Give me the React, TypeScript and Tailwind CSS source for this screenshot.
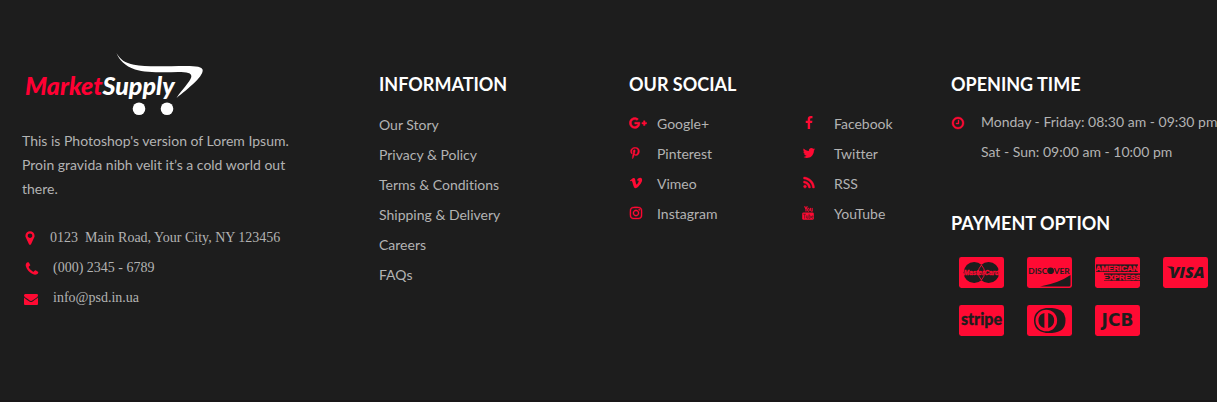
import React from "react";
import { FaGooglePlusG, FaInstagram, FaPinterestP, FaVimeoV } from "react-icons/fa";

const glyphs = {
  marker:
    "M1152 640q0-106-75-181t-181-75-181 75-75 181 75 181 181 75 181-75 75-181zm256 0q0 109-33 179l-364 774q-16 33-47.5 52t-67.5 19-67.5-19-46.5-52l-365-774q-33-70-33-179 0-212 150-362t362-150 362 150 150 362z",
  phone:
    "M1600 1240q0 27-10 70.5t-21 68.5q-21 50-122 106-94 51-186 51-27 0-53-3.5t-57.5-12.5-47-14.5-55.5-20.5-49-18q-98-35-175-83-127-79-264-216t-216-264q-48-77-83-175-3-9-18-49t-20.5-55.5-14.5-47-12.5-57.5-3.5-53q0-92 51-186 56-101 106-122 25-11 68.5-21t70.5-10q14 0 21 3 18 6 53 76 11 19 30 54t35 63.5 31 53.5q3 4 17.5 25t21.5 35.5 7 28.5q0 20-28.5 50t-62 55-62 53-28.5 46q0 9 5 22.5t8.5 20.5 14 24 11.5 19q76 137 174 235t235 174q2 1 19 11.5t24 14 20.5 8.5 22.5 5q18 0 46-28.5t53-62 55-62 50-28.5q14 0 28.5 7t35.5 21.5 25 17.5q25 15 53.5 31t63.5 35 54 30q70 35 76 53 3 7 3 21z",
  mail:
    "M1792 710v794q0 66-47 113t-113 47h-1472q-66 0-113-47t-47-113v-794q44 49 101 87 362 246 497 345 57 42 92.5 65.5t94.5 48 110 24.5h2q51 0 110-24.5t94.5-48 92.5-65.5q170-123 498-345 57-39 100-87zm0-294q0 79-49 151t-122 123q-376 261-468 325-10 7-42.5 31t-54 38.5-52 32.5-57.5 27-50 9h-2q-23 0-50-9t-57.5-27-52-32.5-54-38.5-42.5-31q-91-64-262-182.5t-205-142.5q-62-42-117-115.5t-55-136.5q0-78 41.5-130t118.5-52h1472q65 0 112.5 47t47.5 113z",
  clock:
    "M1024 544v448q0 14-9 23t-23 9h-320q-14 0-23-9t-9-23v-64q0-14 9-23t23-9h224v-352q0-14 9-23t23-9h64q14 0 23 9t9 23zm416 352q0-148-73-273t-198-198-273-73-273 73-198 198-73 273 73 273 198 198 273 73 273-73 198-198 73-273zm224 0q0 209-103 385.5t-279.5 279.5-385.5 103-385.5-103-279.5-279.5-103-385.5 103-385.5 279.5-279.5 385.5-103 385.5 103 279.5 279.5 103 385.5z",
  facebook:
    "M1343 12v264h-157q-86 0-116 36t-30 108v189h293l-39 296h-254v759h-306v-759h-255v-296h255v-218q0-186 104-288.5t277-102.5q147 0 228 12z",
  twitter:
    "M1684 408q-67 98-162 167 1 14 1 42 0 130-38 259.5t-115.5 248.5-184.5 210.5-258 146-323 54.5q-271 0-496-145 35 4 78 4 225 0 401-138-105-2-188-64.5t-114-159.5q33 5 61 5 43 0 85-11-112-23-185.5-111.5t-73.5-205.5v-4q68 38 146 41-66-44-105-115t-39-154q0-88 44-163 121 149 294.5 238.5t371.5 99.5q-8-38-8-74 0-134 94.5-228.5t228.5-94.5q140 0 236 102 109-21 205-78-37 115-142 178 93-10 186-50z",
  rss:
    "M576 1344q0 80-56 136t-136 56-136-56-56-136 56-136 136-56 136 56 56 136zm512 123q2 28-17 48-18 21-47 21h-135q-25 0-43-16.5t-20-41.5q-22-229-184.5-391.5t-391.5-184.5q-25-2-41.5-20t-16.5-43v-135q0-29 21-47 17-17 43-17h5q160 13 306 80.5t259 181.5q114 113 181.5 259t80.5 306zm512 2q2 27-18 47-18 20-46 20h-143q-26 0-44.5-17.5t-19.5-42.5q-12-215-101-408.5t-231.5-336-336-231.5-408.5-102q-25-1-42.5-19.5t-17.5-43.5v-143q0-28 20-46 18-18 44-18h3q262 13 501.5 120t425.5 294q187 186 294 425.5t120 501.5z",
};

function Glyph({ name, className = "size-4" }: { name: keyof typeof glyphs; className?: string }) {
  return (
    <svg
      viewBox="0 0 1792 1792"
      className={className}
      fill="currentColor"
      stroke="currentColor"
      strokeWidth={name === "clock" || name === "rss" ? 50 : 0}
      aria-hidden="true"
    >
      <path d={glyphs[name]} />
    </svg>
  );
}

function YouTubeIcon() {
  return (
    <svg viewBox="0 0 12 14" className="h-3.5 w-3" aria-hidden="true">
      <path d="M2.6 0.3 L4 3.2 L5.3 0.3 M4 3.2 V5.6" fill="none" stroke="currentColor" strokeWidth="1.1" />
      <rect x="5.6" y="2.3" width="1.6" height="3" rx="0.8" fill="none" stroke="currentColor" strokeWidth="1" />
      <path d="M8.6 1.9 V4.8 Q9.2 5.7 10.2 4.6 M10.2 1.9 V5.6" fill="none" stroke="currentColor" strokeWidth="1" />
      <rect x="0.2" y="6.4" width="11.6" height="7.4" rx="1.4" fill="currentColor" />
      <path
        d="M1.2 8.2 H4 M2.6 8.2 V12.6 M4.4 9.4 V12 Q5 12.8 5.9 11.9 M5.9 9.4 V12.6 M7.1 7.8 V12.6 M7.1 10 Q8.5 9.2 8.5 10.6 V11.6 Q8.5 12.8 7.1 12.2 M9.6 11 H11 V10.4 Q10.3 9.2 9.6 10.4 V11.8 Q10.3 13 11 11.8"
        fill="none"
        stroke="#1d1d1d"
        strokeWidth="0.5"
      />
    </svg>
  );
}

function Logo() {
  return (
    <svg viewBox="0 0 184 66" className="h-[66px] w-[184px]" role="img" aria-label="MarketSupply">
      <text x="3" y="43" fontFamily="Lato" fontWeight="900" fontStyle="italic" fontSize="25">
        <tspan fill="#ff0033">Market</tspan>
        <tspan fill="#ffffff">Supply</tspan>
      </text>
      <path
        d="M94.5 1 C98 7.5 103 11 112 12.8 C124 15.2 145 14 164 14 C174 14 181 14.8 180.7 18.5 C180.5 25 167 36 154.5 46 C160 37.5 168 30 169.3 25 C170 20.8 165 20 156 20 C140 20.4 124 20.6 113 17.4 C103 14 97 8 94.5 1 Z"
        fill="#ffffff"
      />
      <circle cx="117" cy="56.7" r="6.3" fill="#ffffff" />
      <circle cx="145" cy="56.7" r="6.3" fill="#ffffff" />
    </svg>
  );
}

const ink = "#1d1d1d";
const red = "#ff0a33";

function Card({ label, children }: { label: string; children: React.ReactNode }) {
  return (
    <li>
      <svg viewBox="0 0 45 31" className="h-[31px] w-[45px]" role="img" aria-label={label}>
        <rect width="45" height="31" rx="2.4" fill={red} />
        {children}
      </svg>
    </li>
  );
}

function PaymentCards() {
  return (
    <ul className="ml-2 grid w-max grid-cols-4 gap-x-[23px] gap-y-[17px]">
      <Card label="MasterCard">
        <circle cx="15.2" cy="15.5" r="10.5" fill={ink} />
        <circle cx="29.6" cy="15.5" r="10.5" fill={ink} />
        <path d="M22.4 8 Q29 15.5 22.4 23 Q16 15.5 22.4 8 Z" fill="none" stroke={red} strokeWidth="0.9" />
        <text x="22.4" y="17.8" textAnchor="middle" fontFamily="Liberation Sans" fontWeight="700" fontStyle="italic" fontSize="6.4" fill={red} stroke={red} strokeWidth="0.3">
          MasterCard
        </text>
      </Card>
      <Card label="Discover">
        <text x="22" y="16.6" textAnchor="middle" fontFamily="Lato" fontWeight="700" fontSize="8.4" fill={ink}>
          DISCOVER
        </text>
        <circle cx="23.6" cy="13.6" r="3.2" fill={ink} />
        <path d="M13 29.5 Q32 26 43.5 18 V28 Q43.5 29.5 42 29.5 Z" fill={ink} />
      </Card>
      <Card label="American Express">
        <rect x="1" y="7.4" width="42" height="7.6" fill={ink} />
        <rect x="9" y="16.4" width="36" height="7.4" fill={ink} />
        <text x="22" y="14.2" textAnchor="middle" fontFamily="Liberation Sans" fontWeight="700" fontSize="8" fill={red} stroke={red} strokeWidth="0.4">
          AMERICAN
        </text>
        <text x="27" y="23" textAnchor="middle" fontFamily="Liberation Sans" fontWeight="700" fontSize="8" fill={red} stroke={red} strokeWidth="0.4">
          EXPRESS
        </text>
      </Card>
      <Card label="Visa">
        <text x="24" y="21.2" textAnchor="middle" fontFamily="Open Sans" fontWeight="800" fontStyle="italic" fontSize="16" fill={ink}>
          VISA
        </text>
        <path d="M4 9.4 H9.5 L11 15 Q8 11 4 9.4 Z" fill={ink} />
      </Card>
      <Card label="Stripe">
        <text x="22.5" y="20" textAnchor="middle" fontFamily="Lato" fontWeight="900" fontSize="16" fill={ink} stroke={ink} strokeWidth="0.3">
          stripe
        </text>
      </Card>
      <Card label="Diners Club">
        <path d="M19 3 H25 Q38.5 4 38.5 15.5 Q38.5 27 25 28 H19 Q7 26 7 15.5 Q7 5 19 3 Z" fill={ink} />
        <circle cx="19.3" cy="15.5" r="10.8" fill={red} />
        <path d="M17.4 8 A7.7 7.7 0 0 0 17.4 23 Z M21.2 8 A7.7 7.7 0 0 1 21.2 23 Z" fill={ink} />
      </Card>
      <Card label="JCB">
        <text x="22.5" y="21.2" textAnchor="middle" fontFamily="DejaVu Sans" fontWeight="700" fontSize="17" fill={ink}>
          JCB
        </text>
      </Card>
    </ul>
  );
}

function Heading({ children }: { children: React.ReactNode }) {
  return <h2 className="text-lg leading-6 font-bold text-white">{children}</h2>;
}

const links = ["Our Story", "Privacy & Policy", "Terms & Conditions", "Shipping & Delivery", "Careers", "FAQs"];

const social = [
  { name: "Google+", icon: <FaGooglePlusG className="size-[18px]" stroke="currentColor" strokeWidth="16" /> },
  { name: "Facebook", icon: <Glyph name="facebook" className="size-3.5" /> },
  { name: "Pinterest", icon: <FaPinterestP className="size-3" stroke="currentColor" strokeWidth="14" /> },
  { name: "Twitter", icon: <Glyph name="twitter" className="size-3.5" /> },
  { name: "Vimeo", icon: <FaVimeoV className="size-3.5" /> },
  { name: "RSS", icon: <Glyph name="rss" className="size-3.5" /> },
  { name: "Instagram", icon: <FaInstagram className="size-3.5" stroke="currentColor" strokeWidth="12" /> },
  { name: "YouTube", icon: <YouTubeIcon /> },
];

export default function App() {
  return (
    <footer className="min-h-screen border-b-2 border-[#191718] bg-[#1d1d1d] pt-[52px] pb-14 pl-[22px] font-['Lato',sans-serif] text-sm text-[#b3b3b3] [font-variant-ligatures:no-common-ligatures]">
      <div className="grid grid-cols-[minmax(0,357fr)_minmax(0,250fr)_minmax(0,322fr)_minmax(0,266fr)]">
        <section>
          <Logo />
          <p className="mt-[11px] max-w-[280px] leading-6">
            This is Photoshop's version of Lorem Ipsum. Proin gravida nibh velit it’s a cold world out there.
          </p>
          <address className="mt-[22px] font-['Liberation_Serif',serif] leading-[30px] not-italic">
            <div className="flex items-center">
              <span className="flex w-7 text-[#ff0a33]"><Glyph name="marker" /></span>
              <span className="whitespace-pre">0123  Main Road, Your City, NY 123456</span>
            </div>
            <div className="flex items-center">
              <span className="flex w-[31px] pt-0.5 pl-0.5 text-[#ff0a33]"><Glyph name="phone" /></span>
              <a href="tel:0002345-6789">(000) 2345 - 6789</a>
            </div>
            <div className="flex items-center">
              <span className="flex w-[31px] pt-0.5 pl-0.5 text-[#ff0a33]"><Glyph name="mail" className="size-3.5" /></span>
              <a href="mailto:info@psd.in.ua">info@psd.in.ua</a>
            </div>
          </address>
        </section>

        <nav className="pt-5" aria-label="Information">
          <Heading>INFORMATION</Heading>
          <ul className="mt-3.5 leading-[30px]">
            {links.map((label) => (
              <li key={label}>
                <a href="#">{label}</a>
              </li>
            ))}
          </ul>
        </nav>

        <section className="pt-5">
          <Heading>OUR SOCIAL</Heading>
          <ul className="mt-[13px] grid grid-cols-[173fr_149fr] leading-[30px]">
            {social.map(({ name, icon }, i) => (
              <li key={name}>
                <a href="#" className="flex items-center">
                  <span className={i % 2 ? "flex w-8 pb-0.5 text-[#ff0a33]" : "flex w-7 pb-0.5 text-[#ff0a33]"}>{icon}</span>
                  {name}
                </a>
              </li>
            ))}
          </ul>
        </section>

        <div className="pt-5">
          <section>
            <Heading>OPENING TIME</Heading>
            <div className="mt-[11px] flex leading-[30px] whitespace-nowrap">
              <span className="flex h-8 w-[30px] shrink-0 items-center text-[#ff0a33]"><Glyph name="clock" className="size-3.5" /></span>
              <div className="min-w-0">
                <p>Monday - Friday: 08:30 am - 09:30 pm</p>
                <p>Sat - Sun: 09:00 am - 10:00 pm</p>
              </div>
            </div>
          </section>
          <section className="mt-11">
            <Heading>PAYMENT OPTION</Heading>
            <div className="mt-[22px]">
              <PaymentCards />
            </div>
          </section>
        </div>
      </div>
    </footer>
  );
}
